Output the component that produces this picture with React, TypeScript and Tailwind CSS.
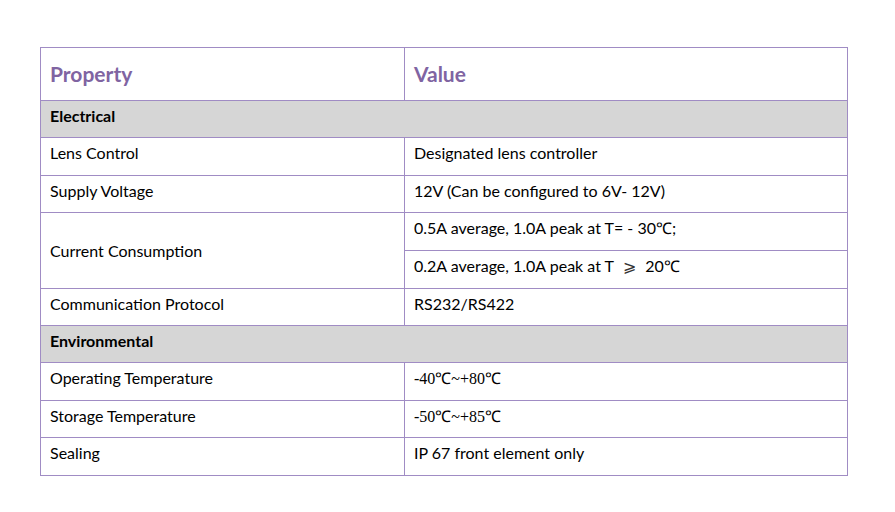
const deg = (s: string) => <span className="font-['Liberation_Serif',serif]">{s}</span>;

const cell = "border border-[#a08cc4] px-[9px] pt-[3px] align-top";

const SectionRow = ({ title }: { title: string }) => (
  <tr className="h-[37px] bg-[#d6d6d6]">
    <td colSpan={2} className={cell + " font-bold"}>
      {title}
    </td>
  </tr>
);

const Row = ({ label, value, tall }: { label: string; value: React.ReactNode; tall?: boolean }) => (
  <tr className={tall ? "h-[38px]" : "h-[37px]"}>
    <td className={cell}>{label}</td>
    <td className={cell}>{value}</td>
  </tr>
);

export default function App() {
  return (
    <div className="w-[895px] h-[512px] bg-white pt-[47px] pl-[40px] font-['Lato','Open_Sans',sans-serif] text-[16px] leading-[24px] text-black">
      <table className="border-collapse w-[808px] table-fixed border border-[#9b80c0]">
        <colgroup>
          <col className="w-[364px]" />
          <col />
        </colgroup>
        <tbody>
          <tr className="h-[53px]">
            <td className="border border-[#a08cc4] px-[9px] align-middle text-[21px] font-bold text-[#8064a2]">
              Property
            </td>
            <td className="border border-[#a08cc4] px-[9px] align-middle text-[21px] font-bold text-[#8064a2]">
              Value
            </td>
          </tr>
          <SectionRow title="Electrical" />
          <Row label="Lens Control" value="Designated lens controller" tall />
          <Row label="Supply Voltage" value="12V (Can be configured to 6V- 12V)" />
          <tr className="h-[38px]">
            <td rowSpan={2} className="border border-[#a08cc4] px-[9px] align-middle">
              Current Consumption
            </td>
            <td className={cell}>
              0.5A average, 1.0A peak at T= - 30{deg("℃")};
            </td>
          </tr>
          <tr className="h-[38px]">
            <td className={cell}>
              0.2A average, 1.0A peak at T{" "}
              <span className="font-['DejaVu_Sans',sans-serif] text-[16px] text-[#333]">{"\u00a0⩾\u00a0"}</span>{" "}
              20{deg("℃")}
            </td>
          </tr>
          <Row label="Communication Protocol" value="RS232/RS422" />
          <SectionRow title="Environmental" />
          <Row label="Operating Temperature" value={deg("-40℃~+80℃")} tall />
          <Row label="Storage Temperature" value={deg("-50℃~+85℃")} />
          <Row label="Sealing" value="IP 67 front element only" tall />
        </tbody>
      </table>
    </div>
  );
}
